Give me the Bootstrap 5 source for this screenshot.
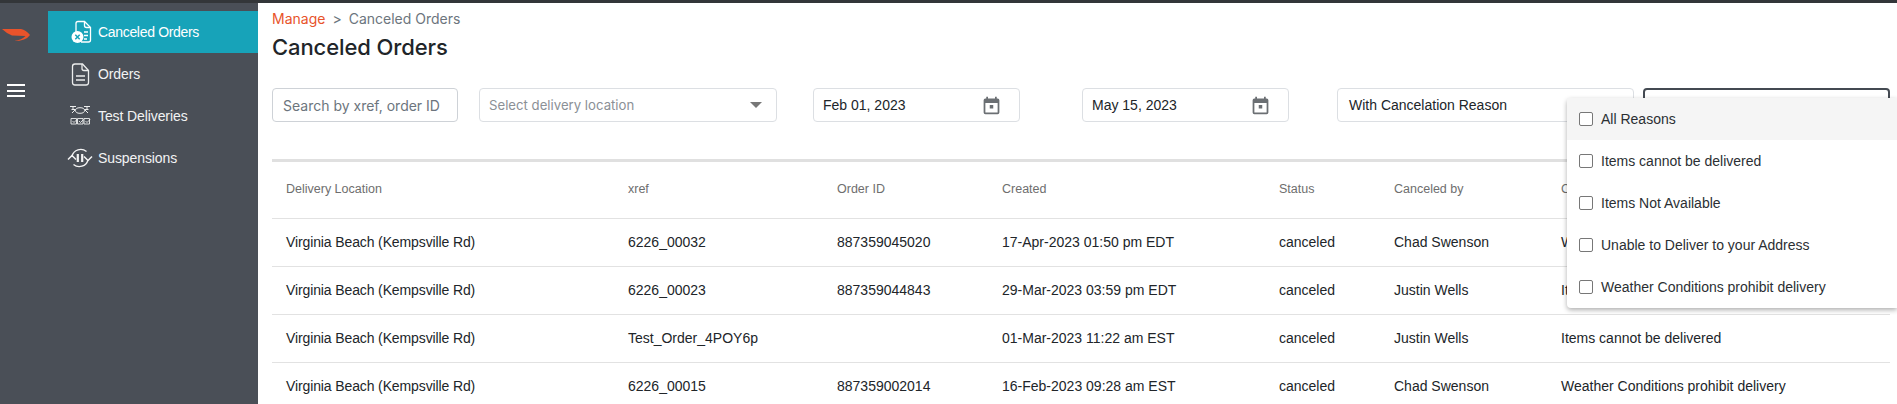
<!DOCTYPE html>
<html lang="en">

<head>
    <meta charset="UTF-8">
    <title>Canceled Orders</title>
    <link href="https://cdn.jsdelivr.net/npm/bootstrap@5.3.0/dist/css/bootstrap.min.css" rel="stylesheet">
    <style>
        html, body { height: 100%; overflow: hidden; }
        body { font-family: "Liberation Sans", Arial, sans-serif; font-size: 14px; color: #212529; border-top: 3px solid #333639; }
        .shell { height: 100%; }

        /* sidebar */
        .sidebar { width: 258px; background: #4a4f57; flex-shrink: 0; }
        .rail { width: 48px; padding-top: 24px; }
        .logo { display: block; margin-left: 1px; }
        .burger { margin: 41px 0 0 7px; width: 18px; }
        .burger span { display: block; height: 2px; background: #fff; margin-bottom: 3.6px; }
        .side-nav { width: 210px; padding-top: 8px; }
        .side-nav a { height: 42px; padding-left: 16px; gap: 2px; color: #f2f3f4; text-decoration: none; letter-spacing: -.1px; }
        .side-nav a.active { background: #17a3b9; color: #fff; letter-spacing: -.32px; }

        /* header */
        .main { padding: 0 7px 0 14px; min-width: 0; position: relative; }
        .breadcrumb { --bs-breadcrumb-divider: '>'; --bs-breadcrumb-margin-bottom: 0; --bs-breadcrumb-item-padding-x: 7px; font-family: Inter, sans-serif; font-size: 14px; padding-top: 6px; line-height: 20px; }
        .breadcrumb a { color: #e8532b; text-decoration: none; }
        .breadcrumb-item.active, .breadcrumb-item + .breadcrumb-item::before { color: #6c757d; }
        .page-title { font-family: Inter, sans-serif; font-size: 22px; font-weight: 500; line-height: 30px; margin: 3px 0 26px; letter-spacing: -.1px; }

        /* filters */
        .filter-bar { height: 34px; font-family: Inter, sans-serif; font-size: 14px; }
        .fbox { height: 34px; border: 1px solid #dcdfe3; border-radius: 4px; padding: 0 11px; flex-shrink: 0; }
        .f-search { width: 186px; border-color: #ced2d7; color: #6c757d; padding-left: 10px; }
        .f-loc { width: 298px; margin-left: 21px; color: #8b9096; padding-left: 9px; padding-right: 14px; font-size: 13.2px; }
        .f-loc span { padding-top: 2px; }
        .f-date { width: 207px; padding-left: 9px; padding-right: 17px; font-family: "Liberation Sans", Arial, sans-serif; font-size: 14px; }
        .f-date1 { margin-left: 36px; }
        .f-date2 { margin-left: 62px; }
        .f-reason { width: 297px; margin-left: 48px; font-family: "Liberation Sans", Arial, sans-serif; font-size: 14px; }
        .f-open { width: 247px; margin-left: 9px; border: 2px solid #444a52; }
        .caret { width: 0; height: 0; border-left: 6.5px solid transparent; border-right: 6.5px solid transparent; border-top: 6px solid #777; }

        /* table */
        .rule { height: 3px; background: #e0e0e0; margin-top: 37px; }
        .orders { table-layout: fixed; width: 1618px; margin: 0; --bs-table-border-color: #e2e2e2; }
        .orders th, .orders td { padding: 0 14px; vertical-align: middle; white-space: nowrap; }
        .orders th { height: 56px; font-size: 12.5px; font-weight: 400; color: #6e6e6e; }
        .orders td { height: 48px; font-size: 14px; color: #212529; }
        .orders td.loc { letter-spacing: -.12px; }
        .c-loc { width: 342px; } .c-xref { width: 209px; } .c-id { width: 165px; } .c-created { width: 277px; }
        .c-status { width: 115px; } .c-by { width: 167px; } .c-reason { width: 343px; }

        /* reasons menu */
        .reason-menu { position: absolute; top: 95px; right: 0; width: 330px; padding: 0; margin: 0; border: 0; border-radius: 4px 0 0 4px; box-shadow: 0 2px 5px rgba(0,0,0,.32); display: block; z-index: 5; }
        .reason-menu label { height: 42px; padding-left: 12px; gap: 8px; font-size: 14px; color: #2b2f33; }
        .reason-menu label.hover { background: #f5f5f5; }
        .reason-menu .form-check-input { width: 14px; height: 14px; margin: 0; border-color: #777; border-radius: 2px; flex-shrink: 0; }
    </style>
</head>

<body>
    <div class="shell d-flex">
        <!-- menu lateral -->
        <div class="sidebar d-flex">
            <div class="rail">
                <svg class="logo" width="30" height="16" viewBox="0 0 30 16"><path fill="#e8532b" d="M1 2L20 2Q25 3 29 8Q25 14 13 14Q21 13 24.500 9L11 8.500Q5 6 1 2z"/></svg>
                <div class="burger"><span></span><span></span><span></span></div>
            </div>
            <nav class="side-nav d-flex flex-column">
                <a href="#" class="active d-flex align-items-center">
                    <svg width="32" height="32" viewBox="0 0 32 32" fill="none" stroke="#fff" stroke-width="1.300"><path d="M12 17V7.500A2 2 0 0 1 14 5.500h6.500l6 6V24a2 2 0 0 1-2 2H17"/><path d="M20.500 5.500v4a2 2 0 0 0 2 2h4M20 16h4M20 19.500h4M20 23h3"/><circle cx="13.500" cy="21" r="6" fill="#fff" stroke="none"/><path d="M11.300 18.800l4.400 4.400M15.700 18.800l-4.400 4.400" stroke="#17a3b9" stroke-width="1.500"/></svg>
                    <span>Canceled Orders</span>
                </a>
                <a href="#" class="d-flex align-items-center">
                    <svg width="32" height="32" viewBox="0 0 32 32" fill="none" stroke="#eceded" stroke-width="1.300"><path d="M11 6h7.500l6 6.500v12a2.500 2.500 0 0 1-2.500 2.500H11a2.500 2.500 0 0 1-2.500-2.500v-16A2.500 2.500 0 0 1 11 6z"/><path d="M18 6v4.500a2 2 0 0 0 2 2h4.500M12 18h9M12 22h9"/></svg>
                    <span>Orders</span>
                </a>
                <a href="#" class="d-flex align-items-center">
                    <svg width="32" height="32" viewBox="0 0 32 32" fill="none" stroke="#eceded" stroke-width="1"><ellipse cx="16" cy="10.500" rx="4.500" ry="2.800"/><path d="M6 6.500h6M20 6.500h6M9 6.500v3M23 6.500v3M11.500 9.500L8 13M20.500 9.500L24 13M7.500 9.500h4M20.500 9.500h4"/><path d="M7 18.500h5.500v5.500H7zM13.500 18.500h5.500v5.500h-5.500zM20 18.500h5.500v5.500H20z" stroke-width=".9"/><path d="M8.500 21l1.500 1.500 3-3M15 21l1.500 1.500 3-3M21.500 21l1.500 1.500 3-3" stroke-width=".9"/></svg>
                    <span>Test Deliveries</span>
                </a>
                <a href="#" class="d-flex align-items-center">
                    <svg width="32" height="32" viewBox="0 0 32 32" fill="none" stroke="#f4f4f4" stroke-width="1.300"><path d="M8 14A9 9 0 0 1 22.500 9.500M24 18A9 9 0 0 1 9.500 22.500"/><path d="M4 17.500l4-4 4 4M20 14.500l4 4 4-4" stroke-width="1.500"/><path d="M13.800 12v8M18.200 12v8" stroke-width="2.200"/></svg>
                    <span>Suspensions</span>
                </a>
            </nav>
        </div>

        <div class="main flex-grow-1">
            <ol class="breadcrumb">
                <li class="breadcrumb-item"><a href="#">Manage</a></li>
                <li class="breadcrumb-item active">Canceled Orders</li>
            </ol>
            <h1 class="page-title">Canceled Orders</h1>

            <!-- filtros -->
            <div class="filter-bar d-flex">
                <div class="fbox f-search d-flex align-items-center">Search by xref, order ID</div>
                <div class="fbox f-loc d-flex align-items-center justify-content-between"><span>Select delivery location</span><i class="caret"></i></div>
                <div class="fbox f-date f-date1 d-flex align-items-center justify-content-between"><span>Feb 01, 2023</span>
                    <svg width="21" height="21" viewBox="0 0 24 24" fill="#6b6f73"><path d="M19 4h-1V2h-2v2H8V2H6v2H5a2 2 0 0 0-2 2v14a2 2 0 0 0 2 2h14a2 2 0 0 0 2-2V6a2 2 0 0 0-2-2zm0 16H5V9h14zM10 11.500h4v4h-4z"/></svg></div>
                <div class="fbox f-date f-date2 d-flex align-items-center justify-content-between"><span>May 15, 2023</span>
                    <svg width="21" height="21" viewBox="0 0 24 24" fill="#6b6f73"><path d="M19 4h-1V2h-2v2H8V2H6v2H5a2 2 0 0 0-2 2v14a2 2 0 0 0 2 2h14a2 2 0 0 0 2-2V6a2 2 0 0 0-2-2zm0 16H5V9h14zM10 11.500h4v4h-4z"/></svg></div>
                <div class="fbox f-reason d-flex align-items-center">With Cancelation Reason</div>
                <div class="fbox f-open"></div>
            </div>

            <div class="dropdown-menu reason-menu">
                <label class="hover d-flex align-items-center"><input class="form-check-input" type="checkbox">All Reasons</label>
                <label class="d-flex align-items-center"><input class="form-check-input" type="checkbox">Items cannot be delivered</label>
                <label class="d-flex align-items-center"><input class="form-check-input" type="checkbox">Items Not Available</label>
                <label class="d-flex align-items-center"><input class="form-check-input" type="checkbox">Unable to Deliver to your Address</label>
                <label class="d-flex align-items-center"><input class="form-check-input" type="checkbox">Weather Conditions prohibit delivery</label>
            </div>

            <div class="rule"></div>
            <table class="table orders">
                <colgroup><col class="c-loc"><col class="c-xref"><col class="c-id"><col class="c-created"><col class="c-status"><col class="c-by"><col class="c-reason"></colgroup>
                <thead>
                    <tr><th>Delivery Location</th><th>xref</th><th>Order ID</th><th>Created</th><th>Status</th><th>Canceled by</th><th>Cancelation Reason</th></tr>
                </thead>
                <tbody>
                    <tr><td class="loc">Virginia Beach (Kempsville Rd)</td><td>6226_00032</td><td>887359045020</td><td>17-Apr-2023 01:50 pm EDT</td><td>canceled</td><td>Chad Swenson</td><td>Weather Conditions prohibit delivery</td></tr>
                    <tr><td class="loc">Virginia Beach (Kempsville Rd)</td><td>6226_00023</td><td>887359044843</td><td>29-Mar-2023 03:59 pm EDT</td><td>canceled</td><td>Justin Wells</td><td>Items cannot be delivered</td></tr>
                    <tr><td class="loc">Virginia Beach (Kempsville Rd)</td><td>Test_Order_4POY6p</td><td></td><td>01-Mar-2023 11:22 am EST</td><td>canceled</td><td>Justin Wells</td><td>Items cannot be delivered</td></tr>
                    <tr><td class="loc">Virginia Beach (Kempsville Rd)</td><td>6226_00015</td><td>887359002014</td><td>16-Feb-2023 09:28 am EST</td><td>canceled</td><td>Chad Swenson</td><td>Weather Conditions prohibit delivery</td></tr>
                </tbody>
            </table>
        </div>
    </div>

    <script src="https://cdn.jsdelivr.net/npm/bootstrap@5.3.0/dist/js/bootstrap.bundle.min.js"></script>
</body>

</html>
